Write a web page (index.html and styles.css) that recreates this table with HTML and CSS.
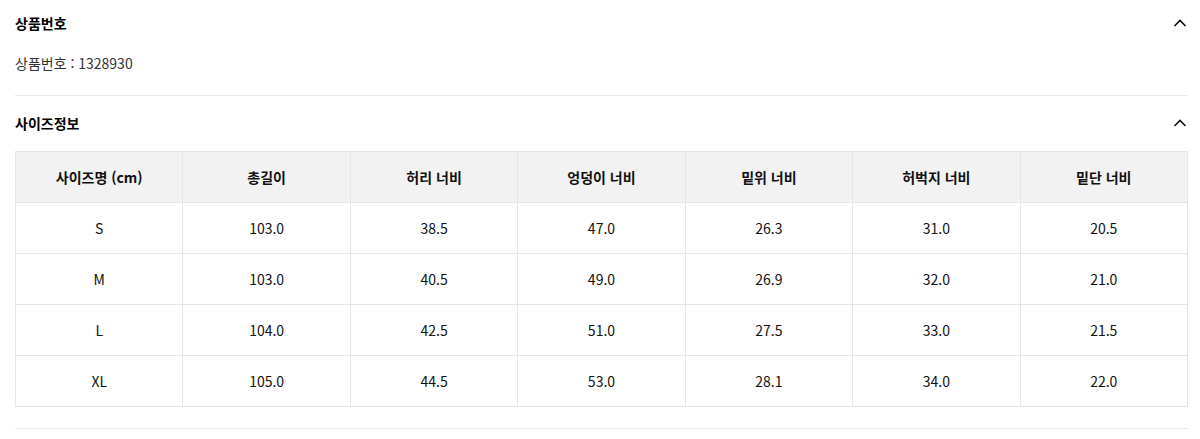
FILE: index.html
```html
<!DOCTYPE html>
<html lang="ko">
<head>
<meta charset="utf-8">
<link rel="stylesheet" href="styles.css">
</head>
<body>
<div class="page">
  <section class="sec">
    <div class="sec-head first">
      <h3 class="sec-title">상품번호</h3>
      <svg class="chev" width="14" height="10" viewBox="0 0 14 10"><path d="M1.5 8 L7 2.5 L12.5 8" fill="none" stroke="#111" stroke-width="1.6"/></svg>
    </div>
    <p class="sec-text">상품번호 : 1328930</p>
  </section>
  <section class="sec">
    <div class="sec-head">
      <h3 class="sec-title">사이즈정보</h3>
      <svg class="chev" width="14" height="10" viewBox="0 0 14 10"><path d="M1.5 8 L7 2.5 L12.5 8" fill="none" stroke="#111" stroke-width="1.6"/></svg>
    </div>
    <table class="size-table">
      <thead>
        <tr><th>사이즈명 (cm)</th><th>총길이</th><th>허리 너비</th><th>엉덩이 너비</th><th>밑위 너비</th><th>허벅지 너비</th><th>밑단 너비</th></tr>
      </thead>
      <tbody>
        <tr><td>S</td><td>103.0</td><td>38.5</td><td>47.0</td><td>26.3</td><td>31.0</td><td>20.5</td></tr>
        <tr><td>M</td><td>103.0</td><td>40.5</td><td>49.0</td><td>26.9</td><td>32.0</td><td>21.0</td></tr>
        <tr><td>L</td><td>104.0</td><td>42.5</td><td>51.0</td><td>27.5</td><td>33.0</td><td>21.5</td></tr>
        <tr><td>XL</td><td>105.0</td><td>44.5</td><td>53.0</td><td>28.1</td><td>34.0</td><td>22.0</td></tr>
      </tbody>
    </table>
  </section>
</div>
</body>
</html>
```

FILE: styles.css
```css
* { box-sizing: border-box; }
html, body { margin: 0; padding: 0; background: #fff; }
body {
  font-family: "Noto Sans CJK KR", "Noto Sans", sans-serif;
  color: #111;
}
.page { padding: 0 12px 0 15px; }
.sec { border-bottom: 1px solid #e8e8e8; }
.sec:first-child { padding-bottom: 22px; }
.sec:last-child { padding-bottom: 21px; }
.sec-head {
  height: 53px;
  display: flex;
  align-items: center;
  justify-content: space-between;
  padding-top: 1px;
}
.sec-head.first { height: 46px; padding-top: 0; }
.sec-title {
  margin: 0;
  font-size: 14px;
  font-weight: 700;
  line-height: 20px;
  color: #000;
}
.chev { margin-right: 1px; }
.sec-text {
  margin: 7px 0 0;
  font-size: 14px;
  line-height: 20px;
  color: #333;
}
.size-table {
  width: 100%;
  border-collapse: collapse;
  table-layout: fixed;
  margin-top: 2px;
  font-size: 14px;
}
.size-table th, .size-table td {
  border: 1px solid #e6e6e6;
  text-align: center;
  height: 51px;
  padding: 0;
}
.size-table th {
  background: #f2f2f2;
  font-weight: 700;
  color: #111;
}
.size-table td { color: #111; }
```
